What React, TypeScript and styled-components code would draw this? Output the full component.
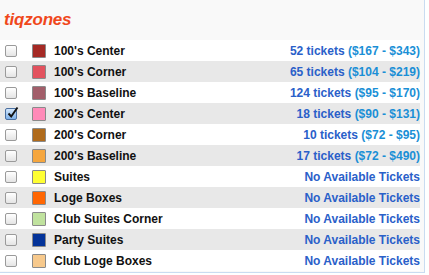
import React from 'react';
import styled, { createGlobalStyle } from 'styled-components';

const GlobalStyle = createGlobalStyle`
    body {
        margin: 0;
        background: #ffffff;
        font-family: 'Liberation Sans', Arial, sans-serif;
    }
`;

type Zone = {
    name: string;
    color: string;
    count?: number;
    range?: string;
    checked?: boolean;
};

const zones: Zone[] = [
    { name: "100's Center", color: '#a52a25', count: 52, range: '($167 - $343)' },
    { name: "100's Corner", color: '#e2525e', count: 65, range: '($104 - $219)' },
    { name: "100's Baseline", color: '#a25e6a', count: 124, range: '($95 - $170)' },
    { name: "200's Center", color: '#ff8ab8', count: 18, range: '($90 - $131)', checked: true },
    { name: "200's Corner", color: '#b06b1c', count: 10, range: '($72 - $95)' },
    { name: "200's Baseline", color: '#f5a63e', count: 17, range: '($72 - $490)' },
    { name: 'Suites', color: '#ffff33' },
    { name: 'Loge Boxes', color: '#ff6602' },
    { name: 'Club Suites Corner', color: '#c0e29e' },
    { name: 'Party Suites', color: '#033399' },
    { name: 'Club Loge Boxes', color: '#f7c98c' },
];

const Panel = styled.div`
    width: 424px;
    height: 272px;
    background: #f9f9f9;
    border-right: 1px solid #c9dcf1;
    border-bottom: 1px solid #c9dcf1;
    display: flex;
    flex-direction: column;
`;

const Header = styled.div`
    height: 40px;
    display: flex;
    align-items: center;
    padding: 0 0 1px 4px;
    box-sizing: border-box;
`;

const Logo = styled.h1`
    margin: 0;
    font-size: 17px;
    font-weight: bold;
    font-style: italic;
    color: #f0481c;
    letter-spacing: -0.2px;
`;

const List = styled.ul`
    list-style: none;
    margin: 0;
    padding: 0;
    width: 420px;
`;

const Row = styled.li<{ $alt: boolean }>`
    height: 21px;
    display: flex;
    align-items: center;
    background: ${({ $alt }) => ($alt ? '#e8e8e8' : '#ffffff')};
    font-size: 12px;
    font-weight: bold;
`;

const Box = styled.span<{ $checked: boolean }>`
    width: 12px;
    height: 12px;
    margin-left: 5px;
    border: 1px solid ${({ $checked }) => ($checked ? '#4a6fa0' : '#9a9a9a')};
    border-radius: 2px;
    box-sizing: border-box;
    position: relative;
    background: ${({ $checked }) =>
        $checked
            ? 'linear-gradient(#d2e6fb, #7eb1ea)'
            : 'linear-gradient(#ffffff, #e4e4e4)'};

    svg {
        position: absolute;
        left: 0;
        top: -3px;
    }
`;

const Swatch = styled.span<{ $color: string }>`
    width: 14px;
    height: 14px;
    margin-left: 15px;
    box-sizing: border-box;
    border: 1px solid #8a8a8a;
    border-radius: 1px;
    background: ${({ $color }) => $color};
`;

const Name = styled.span`
    margin-left: 8px;
    color: #111111;
    flex: 1;
`;

const Tickets = styled.span`
    color: #2a60c9;
`;

const Range = styled.span`
    color: #1a8fd6;
`;

const Check = () => (
    <svg width="14" height="14" viewBox="0 0 14 14">
        <path d="M2.5 7.5 L5.2 10.5 L11.5 1.5" fill="none" stroke="#111" strokeWidth="1.9" />
    </svg>
);

export default function App() {
    return (
        <>
            <GlobalStyle />
            <Panel>
                <Header>
                    <Logo>tiqzones</Logo>
                </Header>
                <List>
                    {zones.map((z, i) => (
                        <Row key={z.name} $alt={i % 2 === 1}>
                            <Box $checked={!!z.checked}>{z.checked && <Check />}</Box>
                            <Swatch $color={z.color} />
                            <Name>{z.name}</Name>
                            {z.count !== undefined ? (
                                <span>
                                    <Tickets>{z.count} tickets</Tickets> <Range>{z.range}</Range>
                                </span>
                            ) : (
                                <Tickets>No Available Tickets</Tickets>
                            )}
                        </Row>
                    ))}
                </List>
            </Panel>
        </>
    );
}
